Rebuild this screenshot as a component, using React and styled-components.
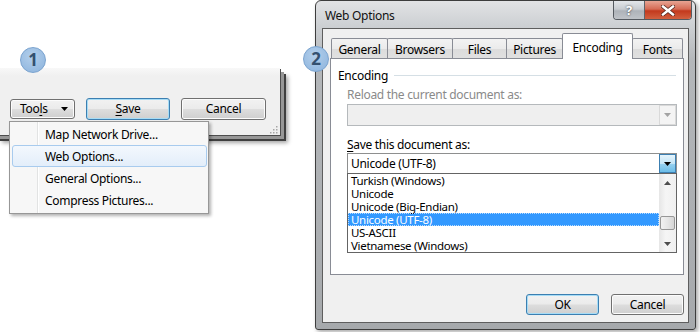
import React from "react";
import styled, { createGlobalStyle } from "styled-components";

const GlobalStyle = createGlobalStyle`
  html, body {
    margin: 0;
    padding: 0;
    background: #ffffff;
  }
`;

const Root = styled.div`
  position: relative;
  width: 700px;
  height: 332px;
  display: flex;
  overflow: hidden;
  background: #ffffff;
  font-family: "Segoe UI", "Noto Sans", "Open Sans", sans-serif;
  font-size: 12px;
  letter-spacing: -0.3px;
  color: #000;
`;

const Badge = styled.div`
  position: absolute;
  left: ${(p) => p.x}px;
  top: ${(p) => p.y}px;
  width: 26px;
  height: 26px;
  border-radius: 50%;
  box-sizing: border-box;
  border: 1px solid #7aa3cf;
  background: radial-gradient(circle at 45% 35%, #b3cfeb 0%, #97bbe1 70%, #8cb2da 100%);
  color: #34506f;
  font-weight: 700;
  font-size: 17px;
  letter-spacing: 0;
  line-height: 24px;
  text-align: center;
  z-index: 5;
`;

/* ---------- left: Save As window fragment ---------- */

const LeftScene = styled.div`
  width: 315px;
  flex-shrink: 0;
`;

const OldWindow = styled.div`
  position: relative;
  margin: 68px 0 0 -6px;
  width: 286px;
  height: 67px;
  background: linear-gradient(#f8f8f8, #f0f0f0 8px);
  box-shadow: 1px 1px 0 #4d4d4d, 4px 4px 0 #979797, 6px 6px 0 #3f3f3f,
    8px 8px 4px rgba(0, 0, 0, 0.35);
`;

const ButtonRow = styled.div`
  display: flex;
  align-items: center;
  padding: 30px 0 0 16px;
  height: 22px;
`;

const PushButton = styled.div`
  box-sizing: border-box;
  width: ${(p) => p.w}px;
  height: ${(p) => p.h || 22}px;
  margin-left: ${(p) => p.ml || 0}px;
  display: flex;
  align-items: center;
  justify-content: center;
  border-radius: 3px;
  border: 1px solid ${(p) => (p.focused ? "#3c7fb1" : "#707070")};
  background: linear-gradient(#f2f2f2 0%, #ebebeb 48%, #dddddd 52%, #cfcfcf 100%);
  box-shadow: inset 0 0 0 1px ${(p) => (p.focused ? "#a6dcf6" : "#fcfcfc")};
  line-height: 1;
`;

const ToolsButton = styled(PushButton)`
  justify-content: space-between;
  padding: 0 6px 0 9px;
`;

const Ul = styled.span`
  text-decoration: underline;
  text-underline-offset: 2px;
`;

const Menu = styled.div`
  position: absolute;
  left: 15px;
  top: 53px;
  width: 200px;
  height: 93px;
  box-sizing: border-box;
  padding: 1px 1px 1px 2px;
  border: 1px solid #979797;
  background: linear-gradient(
      to right,
      transparent 27px,
      #e2e3e3 27px,
      #e2e3e3 28px,
      #ffffff 28px,
      #ffffff 29px,
      transparent 29px
    ),
    #f7f7f7;
  box-shadow: 2px 2px 3px rgba(0, 0, 0, 0.3);
  z-index: 4;
`;

const MenuItem = styled.div`
  box-sizing: border-box;
  height: 22px;
  display: flex;
  align-items: center;
  padding-left: ${(p) => (p.active ? 32 : 33)}px;
  border-radius: 3px;
  border: ${(p) => (p.active ? "1px solid #a8cbee" : "none")};
  background: ${(p) =>
    p.active ? "linear-gradient(#f3f8fd, #e3eefa)" : "transparent"};
`;

const Grip = styled.svg`
  position: absolute;
  right: 2px;
  bottom: 1px;
`;

/* ---------- right: Web Options dialog ---------- */

const Dialog = styled.div`
  width: 381px;
  height: 330px;
  box-sizing: border-box;
  display: flex;
  flex-direction: column;
  border: 1px solid #3d3d3d;
  border-radius: 6px 6px 3px 3px;
  background: linear-gradient(#e2e3e5 0px, #cfd2d5 22px, #b4b7ba 60px, #a6a9ac 100%);
  box-shadow: 2px 2px 4px rgba(0, 0, 0, 0.35);
`;

const TitleBar = styled.div`
  height: 27px;
  flex-shrink: 0;
  display: flex;
  align-items: flex-start;
`;

const TitleText = styled.div`
  padding: 6px 0 0 9px;
  font-size: 12px;
  color: #111;
`;

const CaptionButtons = styled.div`
  margin: 0 3px 0 auto;
  display: flex;
  height: 18px;
  border: 1px solid #555a60;
  border-top: none;
  border-radius: 0 0 4px 4px;
  overflow: hidden;
`;

const CaptionButton = styled.div`
  width: ${(p) => p.w}px;
  display: flex;
  align-items: center;
  justify-content: center;
  color: #fff;
  font-weight: 700;
  font-size: 13px;
  text-shadow: 0 0 2px rgba(0, 0, 0, 0.8);
  background: ${(p) =>
    p.close
      ? "linear-gradient(#e8a493 0%, #d56b55 45%, #c3391d 55%, #d2603f 100%)"
      : "linear-gradient(#e3e6ea 0%, #c8ccd1 45%, #aeb3b9 55%, #bfc3c8 100%)"};
  & + & {
    border-left: 1px solid #5f636a;
  }
`;

const Client = styled.div`
  flex: 1;
  margin: 0 6px 6px;
  border: 1px solid #5e5e5e;
  background: #f0f0f0;
  padding: 4px 4px 0 7px;
  display: flex;
  flex-direction: column;
`;

const TabStrip = styled.div`
  height: 25px;
  display: flex;
  align-items: flex-end;
  padding-left: 1px;
`;

const Tab = styled.div`
  position: relative;
  box-sizing: border-box;
  width: ${(p) => p.w}px;
  height: ${(p) => (p.selected ? 26 : 20)}px;
  margin-right: -1px;
  margin-bottom: ${(p) => (p.selected ? -1 : 0)}px;
  padding-top: ${(p) => (p.selected ? 1 : 2)}px;
  border: 1px solid #898c95;
  border-bottom: none;
  border-radius: 2px 2px 0 0;
  background: ${(p) =>
    p.selected ? "#ffffff" : "linear-gradient(#f3f3f3 0%, #ebebeb 50%, #dcdcdc 51%, #e0e0e0 100%)"};
  z-index: ${(p) => (p.selected ? 3 : 1)};
  display: flex;
  align-items: center;
  justify-content: center;
`;

const Panel = styled.div`
  position: relative;
  z-index: 2;
  height: 217px;
  box-sizing: border-box;
  border: 1px solid #898c95;
  background: #ffffff;
  padding: 8px 7px 0 7px;
`;

const GroupRow = styled.div`
  display: flex;
  align-items: center;
  height: 16px;
`;

const GroupLine = styled.div`
  flex: 1;
  height: 1px;
  margin-left: 6px;
  background: #d5dfe5;
`;

const Indent = styled.div`
  margin-left: 9px;
  width: 330px;
`;

const FieldLabel = styled.div`
  height: 16px;
  line-height: 16px;
  margin-top: ${(p) => p.mt}px;
  color: ${(p) => (p.disabled ? "#8a8a8a" : "#000")};
`;

const Combo = styled.div`
  box-sizing: border-box;
  height: ${(p) => (p.disabled ? 22 : 21)}px;
  margin-top: ${(p) => p.mt || 0}px;
  display: flex;
  border: 1px solid ${(p) => (p.disabled ? "#b5b9bc" : "#8e8f8f")};
  background: ${(p) => (p.disabled ? "#efefef" : "#ffffff")};
`;

const ComboText = styled.div`
  flex: 1;
  padding-left: 3px;
  display: flex;
  align-items: center;
`;

const DropButton = styled.div`
  box-sizing: border-box;
  width: 17px;
  display: flex;
  align-items: center;
  justify-content: center;
  border: 1px solid ${(p) => (p.active ? "#3c7fb1" : "#d9d9d9")};
  background: ${(p) =>
    p.active
      ? "linear-gradient(#e5f4fc 0%, #c4e5f6 50%, #98d1ef 51%, #6cbde8 100%)"
      : "#f4f4f4"};
`;

const ListBox = styled.div`
  box-sizing: border-box;
  height: 80px;
  margin-top: -1px;
  display: flex;
  border: 1px solid #646464;
  background: #ffffff;
`;

const ListItems = styled.div`
  flex: 1;
`;

const ListItem = styled.div`
  box-sizing: border-box;
  height: 13px;
  line-height: 13px;
  font-size: 11.5px;
  padding-left: 3px;
  white-space: nowrap;
  color: ${(p) => (p.selected ? "#fff" : "#000")};
  background: ${(p) => (p.selected ? "#3399ff" : "transparent")};
  outline: ${(p) => (p.selected ? "1px dotted #b8dcff" : "none")};
  outline-offset: -1px;
`;

const ScrollBar = styled.div`
  width: 17px;
  display: flex;
  flex-direction: column;
  background: linear-gradient(to right, #e6e6e6, #f5f5f5 40%, #f0f0f0);
`;

const ScrollArrow = styled.div`
  height: 17px;
  display: flex;
  align-items: center;
  justify-content: center;
`;

const ScrollTrack = styled.div`
  flex: 1;
  padding-top: 25px;
`;

const Thumb = styled.div`
  box-sizing: border-box;
  margin: 0 1px;
  height: 14px;
  border: 1px solid #979797;
  border-radius: 2px;
  background: linear-gradient(to right, #f2f2f2, #e6e6e6 50%, #d6d6d6);
`;

const DialogButtons = styled.div`
  display: flex;
  justify-content: flex-end;
  gap: 12px;
  margin-top: 19px;
`;

const Caret = ({ color = "#000" }) => (
  <svg width="7" height="4" viewBox="0 0 7 4">
    <path d="M0 0 L7 0 L3.5 4 Z" fill={color} />
  </svg>
);

const UpCaret = () => (
  <svg width="7" height="4" viewBox="0 0 7 4">
    <path d="M0 4 L7 4 L3.5 0 Z" fill="#4d4d4d" />
  </svg>
);

const CloseGlyph = () => (
  <svg width="14" height="11" viewBox="0 0 14 11">
    <path d="M2 1.5 L12 9.5 M12 1.5 L2 9.5" stroke="#5a2a20" strokeWidth="4" strokeLinecap="square" />
    <path d="M2 1.5 L12 9.5 M12 1.5 L2 9.5" stroke="#ffffff" strokeWidth="2.4" strokeLinecap="square" />
  </svg>
);

const encodings = [
  "Turkish (Windows)",
  "Unicode",
  "Unicode (Big-Endian)",
  "Unicode (UTF-8)",
  "US-ASCII",
  "Vietnamese (Windows)",
];

const tabs = [
  ["General", 57],
  ["Browsers", 66],
  ["Files", 55],
  ["Pictures", 57],
  ["Encoding", 71],
  ["Fonts", 51],
];

const menuItems = ["Map Network Drive...", "Web Options...", "General Options...", "Compress Pictures..."];

export default function App() {
  return (
    <Root>
      <GlobalStyle />
      <Badge x={20} y={47}>1</Badge>
      <Badge x={303} y={46}>2</Badge>

      <LeftScene>
        <OldWindow>
          <ButtonRow>
            <ToolsButton w={65} h={20}>
              <span>
                Too<Ul>l</Ul>s
              </span>
              <Caret />
            </ToolsButton>
            <PushButton w={84} ml={11} focused>
              <span>
                <Ul>S</Ul>ave
              </span>
            </PushButton>
            <PushButton w={85} ml={11}>
              Cancel
            </PushButton>
          </ButtonRow>
          <Menu>
            {menuItems.map((m) => (
              <MenuItem key={m} active={m === "Web Options..."}>
                {m}
              </MenuItem>
            ))}
          </Menu>
          <Grip width="9" height="8" viewBox="0 0 9 8">
            {[
              [7, 0],
              [7, 3],
              [4, 3],
              [7, 6],
              [4, 6],
              [1, 6],
            ].map(([x, y]) => (
              <rect key={`${x}-${y}`} x={x} y={y} width="1.5" height="1.5" fill="#a7a7a7" />
            ))}
          </Grip>
        </OldWindow>
      </LeftScene>

      <Dialog>
        <TitleBar>
          <TitleText>Web Options</TitleText>
          <CaptionButtons>
            <CaptionButton w={30}>?</CaptionButton>
            <CaptionButton w={46} close>
              <CloseGlyph />
            </CaptionButton>
          </CaptionButtons>
        </TitleBar>
        <Client>
          <TabStrip>
            {tabs.map(([t, w]) => (
              <Tab key={t} w={w} selected={t === "Encoding"}>
                {t}
              </Tab>
            ))}
          </TabStrip>
          <Panel>
            <GroupRow>
              Encoding
              <GroupLine />
            </GroupRow>
            <Indent>
              <FieldLabel mt={4} disabled>
                Reload the current document as:
              </FieldLabel>
              <Combo disabled mt={1}>
                <ComboText />
                <DropButton>
                  <Caret color="#a3a3a3" />
                </DropButton>
              </Combo>
              <FieldLabel mt={11}>
                <Ul>S</Ul>ave this document as:
              </FieldLabel>
              <Combo>
                <ComboText>Unicode (UTF-8)</ComboText>
                <DropButton active>
                  <Caret />
                </DropButton>
              </Combo>
              <ListBox>
                <ListItems>
                  {encodings.map((e) => (
                    <ListItem key={e} selected={e === "Unicode (UTF-8)"}>
                      {e}
                    </ListItem>
                  ))}
                </ListItems>
                <ScrollBar>
                  <ScrollArrow>
                    <UpCaret />
                  </ScrollArrow>
                  <ScrollTrack>
                    <Thumb />
                  </ScrollTrack>
                  <ScrollArrow>
                    <Caret color="#4d4d4d" />
                  </ScrollArrow>
                </ScrollBar>
              </ListBox>
            </Indent>
          </Panel>
          <DialogButtons>
            <PushButton w={73} h={21} focused>
              OK
            </PushButton>
            <PushButton w={73} h={21}>
              Cancel
            </PushButton>
          </DialogButtons>
        </Client>
      </Dialog>
    </Root>
  );
}
